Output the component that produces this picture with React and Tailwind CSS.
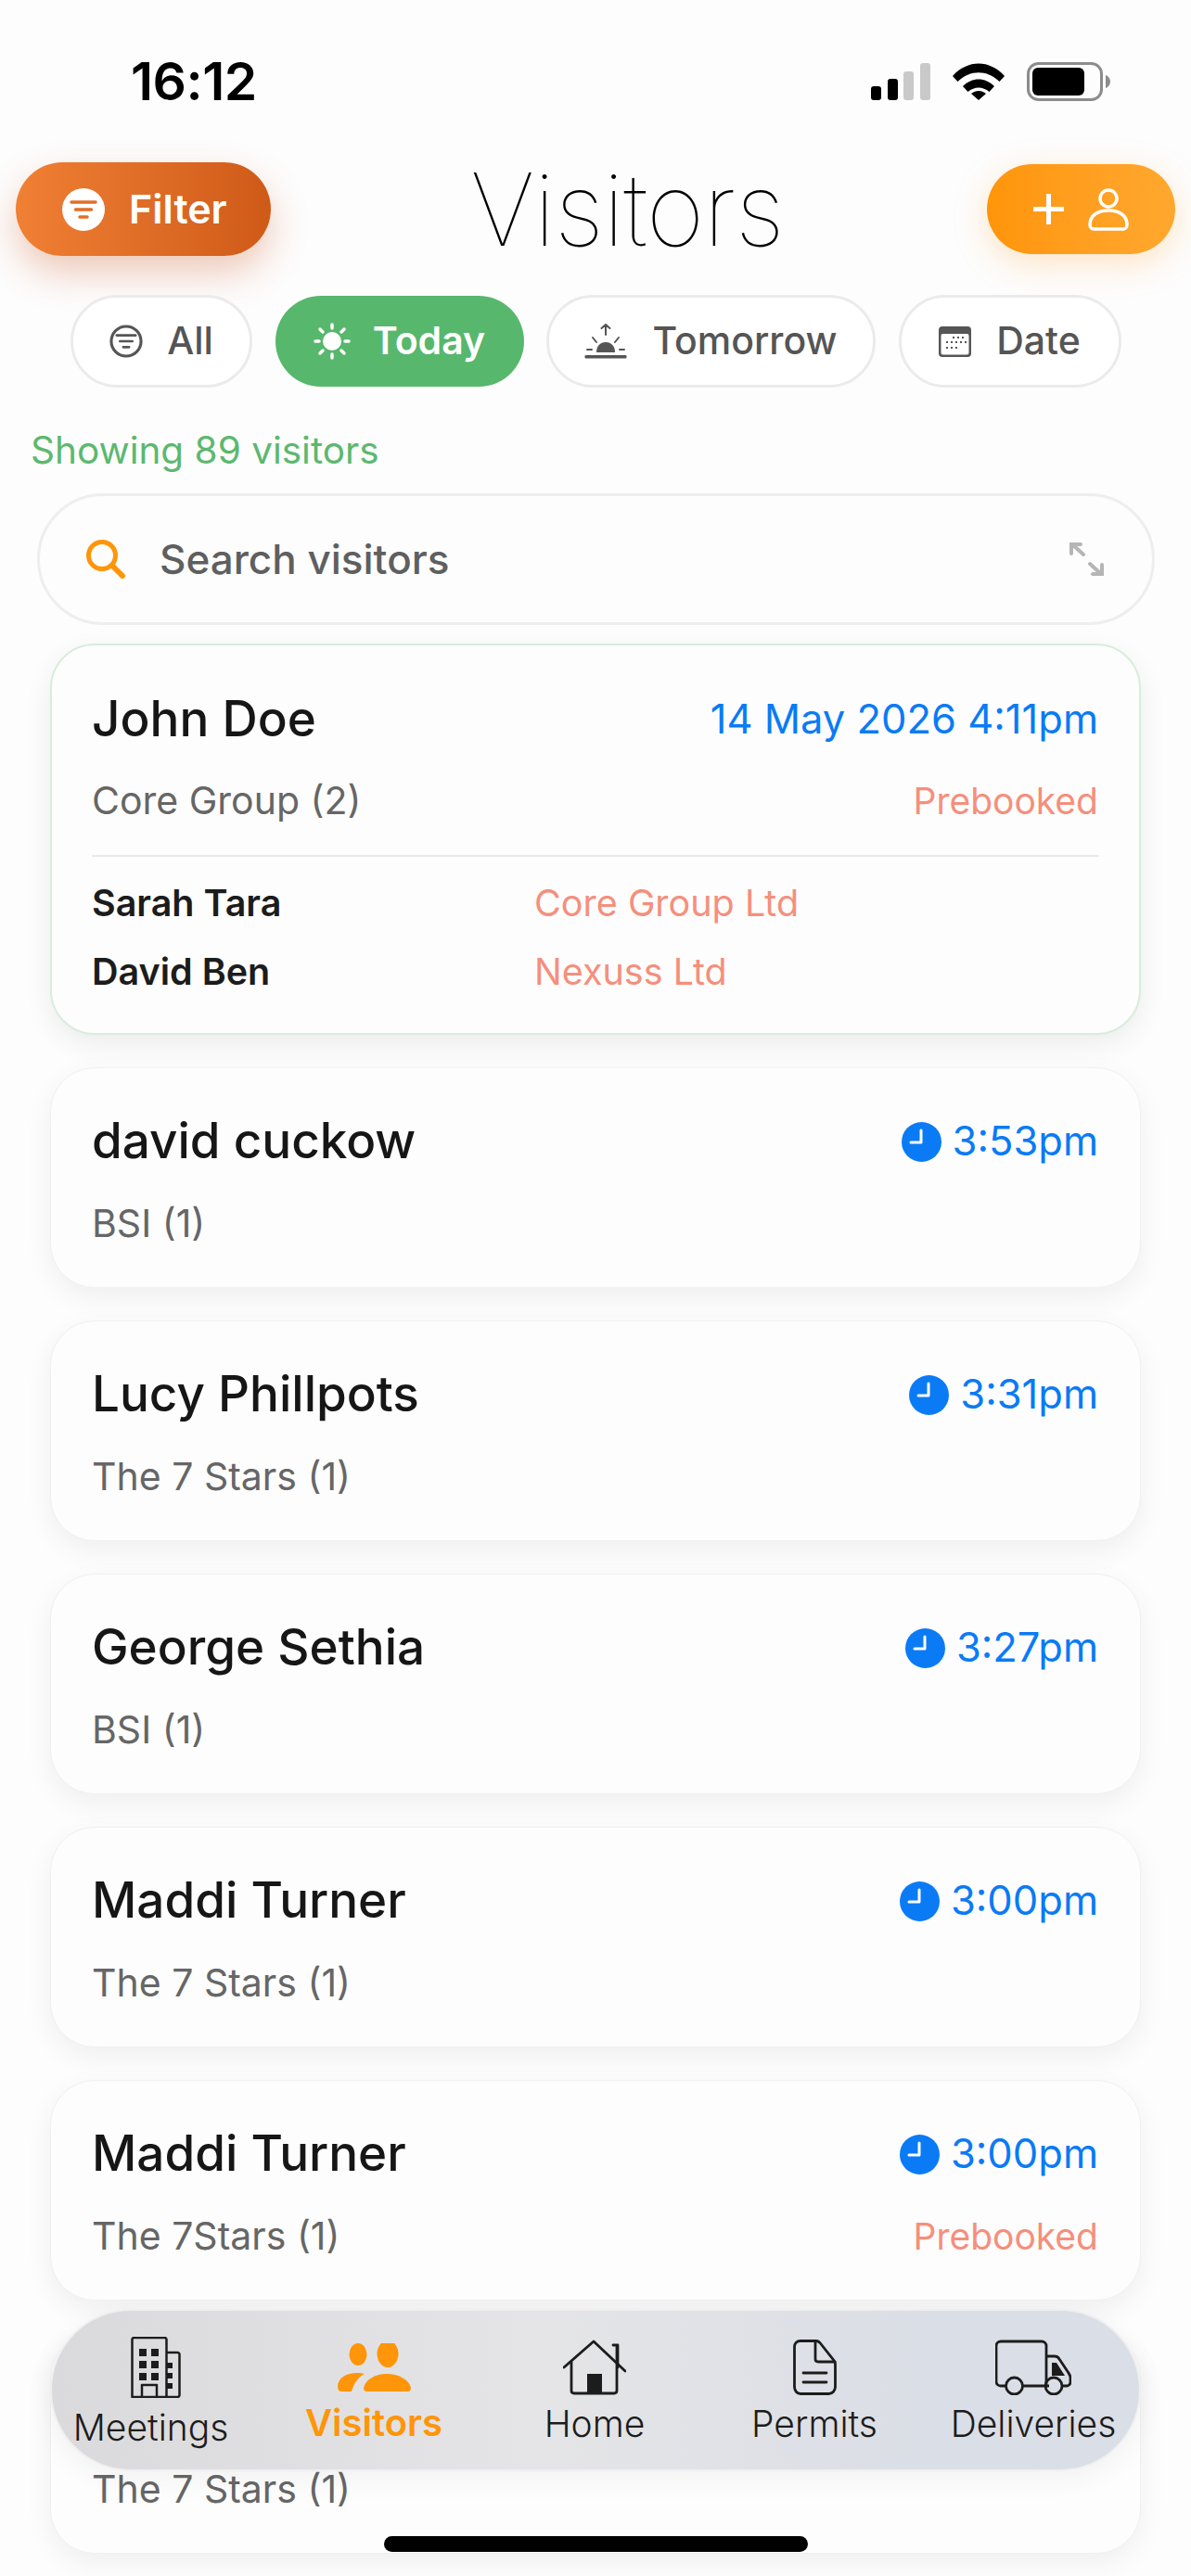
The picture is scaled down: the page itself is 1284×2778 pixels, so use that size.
import React from 'react';

const visitors = [
  { name: 'david cuckow', time: '3:53pm', company: 'BSI (1)' },
  { name: 'Lucy Phillpots', time: '3:31pm', company: 'The 7 Stars (1)' },
  { name: 'George Sethia', time: '3:27pm', company: 'BSI (1)' },
  { name: 'Maddi Turner', time: '3:00pm', company: 'The 7 Stars (1)' },
  { name: 'Maddi Turner', time: '3:00pm', company: 'The 7Stars (1)', prebooked: true },
  // top row of this one sits under the nav bar
  { company: 'The 7 Stars (1)' },
];

const Clock = () => (
  <svg width="43" height="43" viewBox="0 0 43 43" className="shrink-0">
    <circle cx="21.5" cy="21.5" r="21.5" fill="#0a7bf5" />
    <path d="M21 9v13H10" fill="none" stroke="#fff" strokeWidth="3" strokeLinecap="round" strokeLinejoin="round" />
  </svg>
);

const FunnelLines = ({ color, w = 3 }) => (
  <g stroke={color} strokeWidth={w} strokeLinecap="round">
    <path d="M10 15h26M14.500 23h17M19 31h8" />
  </g>
);

const VisitorCard = ({ v }) => (
  <div className="h-[238px] rounded-[48px] border border-[#f0f0f0] bg-[#fdfdfd] shadow-[0_10px_30px_rgba(0,0,0,0.06)] pl-[44px] pr-[45px] pt-[49px]">
    <div className="flex justify-between items-center h-[60px]">
      <span className="text-[53px] font-[550] text-[#161616]">{v.name}</span>
      {v.time && (
        <span className="flex items-center gap-[12px] text-[43.500px] text-[#0a7bf5] leading-none">
          <Clock />
          {v.time}
        </span>
      )}
    </div>
    <div className="flex justify-between items-center h-[48px] mt-[35px]">
      <span className="text-[41px] text-[#666666]">{v.company}</span>
      {v.prebooked && <span className="text-[39px] text-[#f58f7c]">Prebooked</span>}
    </div>
  </div>
);

const NavItem = ({ label, labelClass, children }) => (
  <div className="flex flex-col items-center pt-[28px]">
    <div className="h-[66px] flex items-center justify-center">{children}</div>
    <span className={`${labelClass} whitespace-nowrap`}>{label}</span>
  </div>
);

const navLabel = 'text-[39px] leading-[46px] font-light text-[#1c1c1c]';

export default function App() {
  return (
    <div className="relative w-[1284px] h-[2778px] overflow-hidden bg-[#fdfdfd] font-['Inter',sans-serif]">
      {/* Status bar */}
      <div className="flex justify-between items-center pl-[141px] pr-[87px] pt-[55px] h-[120px]">
        <span className="text-[57px] font-semibold text-black leading-[60px] tracking-[-0.5px]">16:12</span>
        <div className="flex items-center gap-[24px]">
          <svg width="64" height="40" viewBox="0 0 64 40">
            <rect x="0" y="25" width="11" height="15" rx="3" />
            <rect x="18" y="17" width="11" height="23" rx="3" />
            <rect x="35" y="9" width="11" height="31" rx="3" fill="#c9c9c9" />
            <rect x="53" y="0" width="11" height="40" rx="3" fill="#c9c9c9" />
          </svg>
          <svg width="56" height="40" viewBox="0 0 56 40">
            <path d="M0 14C16-4 40-4 56 14l-5.500 6C37 7 19 7 5.500 20z" />
            <path d="M11 25c10-10 24-10 34 0l-5.500 6c-7-6-16-6-23 0z" />
            <path d="M20 33c5-4 11-4 16 0l-8 7z" />
          </svg>
          <svg width="90" height="42" viewBox="0 0 90 42">
            <rect x="1.500" y="1.500" width="79" height="39" rx="11" fill="none" stroke="#8c8c8c" strokeWidth="3" />
            <rect x="6" y="6" width="56" height="30" rx="6" />
            <path d="M85 14c3 1 5 4 5 7s-2 6-5 7z" fill="#8c8c8c" />
          </svg>
        </div>
      </div>

      {/* Header */}
      <div className="flex items-center px-[17px] mt-[55px] h-[101px]">
        <div className="w-[275px] h-[101px] rounded-full flex items-center pl-[50px] gap-[26px] bg-gradient-to-r from-[#f08034] to-[#cf5a18] shadow-[0_18px_40px_rgba(205,90,40,0.32)]">
          <svg width="46" height="46" viewBox="0 0 46 46">
            <circle cx="23" cy="23" r="23" fill="#fff" />
            <FunnelLines color="#e26f27" w={3.500} />
          </svg>
          <span className="text-[43px] font-semibold text-white">Filter</span>
        </div>
        <h1 className="flex-1 pr-[4px] text-center text-[108px] font-thin text-black leading-none tracking-[-1px]">Visitors</h1>
        <div className="w-[203px] h-[97px] rounded-full flex items-center justify-center gap-[26px] bg-gradient-to-r from-[#ff9508] to-[#ffa82e] shadow-[0_10px_36px_rgba(255,160,50,0.28)]">
          <svg width="33" height="33" viewBox="0 0 33 33">
            <path d="M16.500 0v33M0 16.500h33" stroke="#fff" strokeWidth="5" />
          </svg>
          <svg width="44" height="46" viewBox="0 0 44 46" fill="none" stroke="#fff" strokeWidth="3.500">
            <circle cx="22" cy="11" r="9" />
            <path d="M2 39c0-10 9-15 20-15s20 5 20 15c0 3-2 5-4 5H6c-2 0-4-2-4-5z" />
          </svg>
        </div>
      </div>

      {/* Day filter chips */}
      <div className="flex items-center gap-[24.500px] pl-[76px] mt-[42px] h-[100px] text-[41px]">
        <div className="w-[196px] h-[100px] rounded-full flex items-center justify-center gap-[26px] border-[3px] border-[#ebebeb] bg-white text-[#555555]">
          <svg width="36" height="36" viewBox="0 0 46 46" fill="none">
            <circle cx="23" cy="23" r="20.500" stroke="#555" strokeWidth="4" />
            <FunnelLines color="#555" w={3.500} />
          </svg>
          <span className="font-medium">All</span>
        </div>
        <div className="w-[268px] h-[98px] rounded-full flex items-center justify-center gap-[24px] bg-[#57b76c] text-white">
          <svg width="40" height="40" viewBox="0 0 40 40" stroke="#fff" strokeWidth="3.500" strokeLinecap="round">
            <circle cx="20" cy="20" r="10" fill="#fff" stroke="none" />
            <path d="M20 2v4M20 34v4M2 20h4M34 20h4M7 7l3 3M30 30l3 3M7 33l3-3M30 10l3-3" />
          </svg>
          <span className="font-semibold">Today</span>
        </div>
        <div className="w-[355px] h-[100px] rounded-full flex items-center justify-center gap-[27px] border-[3px] border-[#ebebeb] bg-white text-[#555555]">
          <svg width="46" height="38" viewBox="0 0 46 38" fill="#555" stroke="#555" strokeLinecap="round" strokeLinejoin="round">
            <path d="M23 12V1M18.500 5L23 1l4.500 4M9 15l4 5M37 15l-4 5M3 28h5M38 28h5" fill="none" strokeWidth="2" />
            <path d="M13 31c0-7 4-11 10-11s10 4 10 11z" stroke="none" />
            <rect x="0.500" y="34" width="45" height="3.500" rx="1" stroke="none" />
          </svg>
          <span className="font-medium">Tomorrow</span>
        </div>
        <div className="w-[240px] h-[100px] rounded-full flex items-center justify-center gap-[27px] border-[3px] border-[#ebebeb] bg-white text-[#555555]">
          <svg width="35" height="33" viewBox="0 0 35 33">
            <rect x="0" y="0" width="35" height="33" rx="4" fill="#555" />
            <rect x="2.500" y="8" width="30" height="22.500" rx="2" fill="#fff" />
            <g fill="#555">
              <rect x="15" y="11" width="2" height="2" /><rect x="20" y="11" width="2" height="2" /><rect x="25" y="11" width="2" height="2" />
              <rect x="8" y="16" width="2" height="2" /><rect x="13" y="16" width="2" height="2" /><rect x="18" y="16" width="2" height="2" /><rect x="23" y="16" width="2" height="2" /><rect x="28" y="16" width="2" height="2" />
              <rect x="8" y="22" width="2" height="2" /><rect x="13" y="22" width="2" height="2" /><rect x="18" y="22" width="2" height="2" />
            </g>
          </svg>
          <span className="font-medium">Date</span>
        </div>
      </div>

      <div className="mt-[45px] pl-[33px] text-[40.500px] leading-[46px] text-[#5cb86f]">Showing 89 visitors</div>

      {/* Search */}
      <div className="mt-[23px] ml-[40px] w-[1205px] h-[142px] rounded-[71px] border-[3px] border-[#eeeeee] bg-[#fdfdfd] flex items-center px-[49px]">
        <svg width="44" height="42" viewBox="0 0 44 42" fill="none" stroke="#ff9508" strokeWidth="5" strokeLinecap="round">
          <circle cx="18" cy="17" r="14.500" />
          <path d="M29 28l11 11" strokeWidth="6" />
        </svg>
        <span className="ml-[36px] flex-1 text-[44px] font-medium text-[#5f5f5f]">Search visitors</span>
        <svg width="37" height="36" viewBox="0 0 37 36" fill="none" stroke="#b5b5b5" strokeWidth="4" strokeLinecap="round" className="-ml-[3px] mr-[3px]">
          <path d="M15 13L3 2M2 12V2h10M22 23l12 11M35 24v10H25" />
        </svg>
      </div>

      {/* Visitor list */}
      <div className="mt-[20px] ml-[54px] w-[1176px] flex flex-col gap-[35px]">
        <div className="h-[422px] rounded-[48px] border-2 border-[#d9ecdc] bg-[#fdfdfd] shadow-[0_10px_30px_rgba(0,0,0,0.07)] pl-[43px] pr-[44px] pt-[50px]">
          <div className="flex justify-between items-center h-[60px]">
            <span className="text-[53px] font-[550] text-[#161616]">John Doe</span>
            <span className="text-[43.500px] text-[#0a7bf5] leading-none">14 May 2026 4:11pm</span>
          </div>
          <div className="flex justify-between items-center h-[48px] mt-[34px]">
            <span className="text-[41px] text-[#666666]">Core Group (2)</span>
            <span className="text-[39px] text-[#f58f7c]">Prebooked</span>
          </div>
          <div className="mt-[34px] h-[2px] bg-[#e8e8e8]" />
          <div className="mt-[27px] flex leading-[46px]">
            <span className="w-[477px] text-[39.500px] font-semibold text-[#1c1c1c]">Sarah Tara</span>
            <span className="text-[39.500px] text-[#f58f7c]">Core Group Ltd</span>
          </div>
          <div className="mt-[28px] flex leading-[46px]">
            <span className="w-[477px] text-[39.500px] font-semibold text-[#1c1c1c]">David Ben</span>
            <span className="text-[39.500px] text-[#f58f7c]">Nexuss Ltd</span>
          </div>
        </div>
        {visitors.map((v, i) => (
          <VisitorCard key={i} v={v} />
        ))}
      </div>

      {/* Bottom nav */}
      <div className="absolute left-[54px] top-[2490px] w-[1176px] h-[175px] rounded-[87px] border-2 border-[#efefef] bg-gradient-to-r from-[#dadadc] via-[#e5e5e7] via-45% to-[#dadee6] to-80% grid grid-cols-[213px_268px_208px_266px_206px] shadow-[0_8px_30px_rgba(0,0,0,0.05)]">
        <NavItem label="Meetings" labelClass={`mt-[9px] ${navLabel}`}>
          <svg width="54" height="66" viewBox="0 0 54 66" fill="none" stroke="#1c1c1c" strokeWidth="2.500" strokeLinejoin="round" className="ml-[10px]">
            <path d="M1.500 65V3c0-1 1-2 2-2h33c1 0 2 1 2 2v62z" />
            <path d="M38.500 17h12c1 0 2 1 2 2v44c0 1-1 2-2 2h-12" />
            <path d="M12 65V52h16v13" />
            <g fill="#1c1c1c" stroke="none">
              <rect x="9" y="13" width="8" height="8" /><rect x="22" y="13" width="8" height="8" />
              <rect x="9" y="26" width="8" height="8" /><rect x="22" y="26" width="8" height="8" />
              <rect x="9" y="39" width="8" height="8" /><rect x="22" y="39" width="8" height="8" />
              <rect x="39" y="28" width="6" height="6" /><rect x="39" y="39" width="6" height="6" /><rect x="39" y="50" width="6" height="6" />
            </g>
          </svg>
        </NavItem>
        <NavItem label="Visitors" labelClass="mt-[4px] text-[40px] leading-[46px] font-semibold text-[#ff9508]">
          <svg width="79" height="52" viewBox="0 0 79 52" fill="#ff9508">
            <ellipse cx="22" cy="12" rx="9.500" ry="12" />
            <ellipse cx="54" cy="11.500" rx="11.500" ry="14.500" />
            <path d="M0 47c0-10 10-15 21-15 3 0 6 .500 8 1-6 3-11 9-14 19H4c-2 0-4-2-4-5z" />
            <path d="M31 52c-2 0-3-2-3-4 2-9 13-15 25-15s24 6 26 15c0 2-1 4-3 4z" />
          </svg>
        </NavItem>
        <NavItem label="Home" labelClass={`mt-[5px] ${navLabel}`}>
          <svg width="68" height="60" viewBox="0 0 68 60" fill="none" stroke="#1c1c1c" strokeWidth="2.800" strokeLinecap="round" strokeLinejoin="round">
            <path d="M1 30L33 2l34 32" />
            <path d="M9 24v31c0 2 1 3 3 3h43c2 0 3-1 3-3V8" />
            <path d="M54 6h5v24" />
            <rect x="26" y="37" width="16" height="21" fill="#1c1c1c" stroke="none" />
          </svg>
        </NavItem>
        <NavItem label="Permits" labelClass={`mt-[5px] ${navLabel}`}>
          <svg width="47" height="60" viewBox="0 0 47 60" fill="none" stroke="#1c1c1c" strokeWidth="2.800" strokeLinejoin="round" strokeLinecap="round">
            <path d="M8 1.500h17c1.500 0 3 1 4 2l15 19c1 1 1.500 2 1.500 4V51c0 4-3 7.500-7 7.500H8c-4 0-6.500-3.500-6.500-7.500V8c0-4 2.500-6.500 6.500-6.500z" />
            <path d="M24 2v19c0 2 1 3 3 3h18" />
            <path d="M11 36h25M11 46h25" />
          </svg>
        </NavItem>
        <NavItem label="Deliveries" labelClass={`mt-[5px] ${navLabel}`}>
          <svg width="82" height="60" viewBox="0 0 82 60" fill="none" stroke="#1c1c1c" strokeWidth="2.800" strokeLinejoin="round">
            <path d="M11 50H6c-3 0-5-2-5-5V7c0-3 2-5 5-5h44c3 0 5 2 5 5v43H30" />
            <path d="M55 18h9c2 0 4 1 5 3l10 15c1 2 2 3 2 5v5c0 2-2 4-4 4h-4M55 50h3" />
            <circle cx="20.500" cy="50" r="9" />
            <circle cx="63" cy="50" r="9" />
            <path d="M61 25h5l9 14H61z" fill="#1c1c1c" stroke="none" />
          </svg>
        </NavItem>
      </div>

      {/* Home indicator */}
      <div className="absolute left-[414px] top-[2735px] w-[457px] h-[17px] rounded-full bg-black" />
    </div>
  );
}
